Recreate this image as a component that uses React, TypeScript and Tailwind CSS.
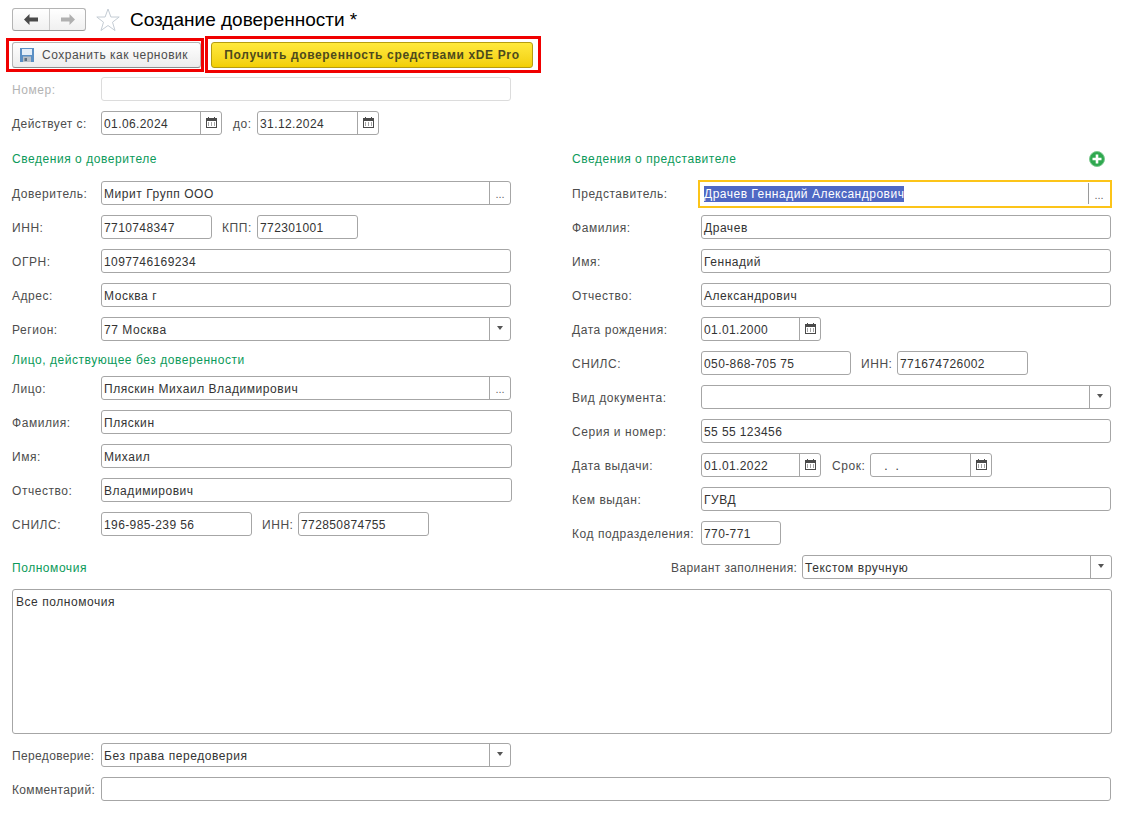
import type { ReactNode } from "react";

type Side = "dots" | "down" | "cal";

function CalendarIcon() {
    return (
        <svg className="mb-[2px]" width="11" height="11" viewBox="0 0 11 11">
            <rect x="0.5" y="1.5" width="10" height="9" fill="#fff" stroke="#4a4a4a" />
            <rect x="0" y="1" width="11" height="3" fill="#4a4a4a" />
            <rect x="2" y="0" width="1" height="2" fill="#4a4a4a" />
            <rect x="8" y="0" width="1" height="2" fill="#4a4a4a" />
            <path d="M2 6h1M5 6h1M8 6h1M2 8h1M5 8h1M8 8h1" stroke="#4a4a4a" strokeWidth="1" />
        </svg>
    );
}

function SideButton({ kind, inset }: { kind: Side; inset?: boolean }) {
    return (
        <div
            className={`w-[21px] shrink-0 border-l flex items-center justify-center text-[#666] ${inset ? "h-[21px] border-[#9a9a9a]" : "h-full border-[#a6a6a6]"}`}
        >
            {kind === "dots" ? <span className="text-[11px] leading-none mt-[3px] tracking-normal">...</span> : null}
            {kind === "down" ? <div className="w-0 h-0 border-x-[3px] border-x-transparent border-t-[4px] border-t-[#555] mb-[2px]" /> : null}
            {kind === "cal" ? <CalendarIcon /> : null}
        </div>
    );
}

function Field({ value, width, side, muted }: { value?: string; width?: string; side?: Side; muted?: boolean }) {
    const numeric = /^[\d\s.-]*$/.test(value ?? "");
    return (
        <div
            className={`${width ?? "flex-1"} h-6 bg-white rounded-[3px] border flex items-center ${muted ? "border-[#dcdcdc]" : "border-[#a6a6a6]"}`}
        >
            <div className={`flex-1 px-[2px] pt-[1px] text-[#333] whitespace-pre overflow-hidden ${numeric ? "tracking-[0.4px]" : ""}`}>{value}</div>
            {side ? <SideButton kind={side} /> : null}
        </div>
    );
}

function Label({ children, width, muted }: { children: ReactNode; width?: string; muted?: boolean }) {
    return (
        <div className={`${width ?? ""} shrink-0 pt-[1px] whitespace-nowrap ${muted ? "text-[#b3b3b3]" : "text-[#4d4d4d]"}`}>{children}</div>
    );
}

function Row({ children, className }: { children: ReactNode; className?: string }) {
    return <div className={`flex items-center h-6 ${className ?? ""}`}>{children}</div>;
}

function Section({ children, className }: { children: ReactNode; className?: string }) {
    return <div className={`text-[#0b9a5a] pt-[1px] ${className ?? ""}`}>{children}</div>;
}

function LabeledField({ label, value, side, labelWidth }: { label: string; value: string; side?: Side; labelWidth: string }) {
    return (
        <Row>
            <Label width={labelWidth}>{label}</Label>
            <Field value={value} side={side} />
        </Row>
    );
}

export default function App() {
    return (
        <div className="w-[1143px] h-[822px] bg-white overflow-hidden font-['Liberation_Sans',Arial,sans-serif] text-[12px] tracking-[0.55px]">
            {/* title bar */}
            <div className="flex items-center h-[23px] mt-2 ml-3">
                <div className="flex w-[74px] h-[23px] border border-[#b4b4b4] border-b-[#9a9a9a] rounded-[3px] bg-gradient-to-b from-white to-[#f0f0f0]">
                    <div className="w-[37px] flex items-center justify-center border-r border-[#c8c8c8]">
                        <svg width="14" height="11" viewBox="0 0 14 11">
                            <path d="M0 5.5 5.5 0v3.5H14v4H5.500V11z" fill="#4a4a4a" />
                        </svg>
                    </div>
                    <div className="flex-1 flex items-center justify-center">
                        <svg width="14" height="11" viewBox="0 0 14 11">
                            <path d="M14 5.500 8.500 0v3.500H0v4h8.500V11z" fill="#b0b0b0" />
                        </svg>
                    </div>
                </div>
                <svg className="ml-[10px]" width="24" height="24" viewBox="0 0 24 24">
                    <path d="M12 1l2.900 8h8.300l-6.700 5.200 2.500 8.300L12 17.500l-7 5 2.500-8.300L.8 9h8.300z" fill="#fff" stroke="#c4ccd4" />
                </svg>
                <div className="ml-[10px] text-[19px] tracking-normal text-black leading-none">Создание доверенности *</div>
            </div>

            {/* toolbar */}
            <div className="flex items-center ml-[6px] mt-[5px] h-[37px]">
                <div className="w-[198px] h-[34px] border-[3px] border-[#f00000] flex items-center pl-[3px]">
                    <div className="w-[190px] h-[26px] flex items-center pl-[7px] gap-[8px] rounded-[3px] border border-[#b4b4b4] border-b-[#8c8c8c] bg-gradient-to-b from-white to-[#ececec] text-[#4d4d4d] tracking-[0.5px]">
                        <svg width="14" height="14" viewBox="0 0 14 14">
                            <path d="M0 0h14v14H0z" fill="#5b8fc4" />
                            <rect x="2" y="1" width="10" height="6" fill="#e4eef8" />
                            <rect x="3" y="8.500" width="8" height="5.500" fill="#b9bfc6" />
                            <rect x="4.500" y="10" width="2.500" height="3" fill="#5f6f80" />
                        </svg>
                        <span>Сохранить как черновик</span>
                    </div>
                </div>
                <div className="ml-[1px] w-[336px] h-[37px] border-[3px] border-[#f00000] flex items-center pl-[3px]">
                    <div className="w-[322px] h-[26px] flex items-center justify-center rounded-[3px] border border-[#b59c10] bg-gradient-to-b from-[#ffe93b] to-[#f2cf00] font-bold text-[#4d4a1c] tracking-[0.65px]">
                        Получить доверенность средствами xDE Pro
                    </div>
                </div>
            </div>

            {/* number and dates */}
            <div className="ml-3 mt-[4px] w-[499px] flex flex-col gap-[10px]">
                <Row>
                    <Label width="w-[89px]" muted>Номер:</Label>
                    <Field muted />
                </Row>
                <Row>
                    <Label width="w-[89px] tracking-[0.45px]">Действует с:</Label>
                    <Field value="01.06.2024" width="w-[121px]" side="cal" />
                    <Label width="w-[35px] pl-[11px]">до:</Label>
                    <Field value="31.12.2024" width="w-[122px]" side="cal" />
                </Row>
            </div>

            {/* two columns */}
            <div className="flex mt-[12px] ml-3">
                <div className="w-[499px]">
                    <Section className="h-[23px] leading-[23px] mb-[11px]">Сведения о доверителе</Section>
                    <div className="flex flex-col gap-[10px]">
                        <LabeledField labelWidth="w-[89px]" label="Доверитель:" value="Мирит Групп ООО" side="dots" />
                        <Row>
                            <Label width="w-[89px]">ИНН:</Label>
                            <Field value="7710748347" width="w-[111px]" />
                            <Label width="w-[45px] pl-[10px]">КПП:</Label>
                            <Field value="772301001" width="w-[101px]" />
                        </Row>
                        <LabeledField labelWidth="w-[89px]" label="ОГРН:" value="1097746169234" />
                        <LabeledField labelWidth="w-[89px]" label="Адрес:" value="Москва г" />
                        <LabeledField labelWidth="w-[89px]" label="Регион:" value="77 Москва" side="down" />
                    </div>
                    <Section className="h-[22px] leading-[22px] mt-[7px] mb-[6px]">Лицо, действующее без доверенности</Section>
                    <div className="flex flex-col gap-[10px]">
                        <LabeledField labelWidth="w-[89px]" label="Лицо:" value="Пляскин Михаил Владимирович" side="dots" />
                        <div className="flex flex-col gap-[10px] -mr-[1px]">
                            <LabeledField labelWidth="w-[89px]" label="Фамилия:" value="Пляскин" />
                            <LabeledField labelWidth="w-[89px]" label="Имя:" value="Михаил" />
                            <LabeledField labelWidth="w-[89px]" label="Отчество:" value="Владимирович" />
                            <Row>
                                <Label width="w-[89px]">СНИЛС:</Label>
                                <Field value="196-985-239 56" width="w-[151px]" />
                                <Label width="w-[46px] pl-[10px]">ИНН:</Label>
                                <Field value="772850874755" width="w-[131px]" />
                            </Row>
                        </div>
                    </div>
                </div>

                <div className="w-[539px] ml-[61px]">
                    <Section className="h-[23px] leading-[23px] mb-[11px] flex items-center justify-between">
                        <span>Сведения о представителе</span>
                        <svg className="mr-[6px]" width="16" height="16" viewBox="0 0 16 16">
                            <circle cx="8" cy="8" r="7.500" fill="#2fa84f" stroke="#7cc98f" strokeWidth="1" />
                            <path d="M8 3.500v9M3.500 8h9" stroke="#fff" strokeWidth="2.600" />
                        </svg>
                    </Section>
                    <div className="flex flex-col gap-[10px]">
                        <Row>
                            <Label width="w-[126px]">Представитель:</Label>
                            <div className="flex-1 h-[28px] mt-[1px] -mr-[1px] pr-[1px] border-2 border-[#fcc419] flex items-center">
                                <div className="flex-1 pl-[4px] tracking-[0.5px]">
                                    <span className="bg-[#4f68c4] text-white py-[1px]">Драчев Геннадий Александрович</span>
                                </div>
                                <SideButton kind="dots" inset />
                            </div>
                        </Row>
                        <LabeledField labelWidth="w-[129px]" label="Фамилия:" value="Драчев" />
                        <LabeledField labelWidth="w-[129px]" label="Имя:" value="Геннадий" />
                        <LabeledField labelWidth="w-[129px]" label="Отчество:" value="Александрович" />
                        <Row>
                            <Label width="w-[129px]">Дата рождения:</Label>
                            <Field value="01.01.2000" width="w-[120px]" side="cal" />
                        </Row>
                        <Row>
                            <Label width="w-[129px]">СНИЛС:</Label>
                            <Field value="050-868-705 75" width="w-[150px]" />
                            <Label width="w-[46px] pl-[10px]">ИНН:</Label>
                            <Field value="771674726002" width="w-[131px]" />
                        </Row>
                        <LabeledField labelWidth="w-[129px]" label="Вид документа:" value="" side="down" />
                        <LabeledField labelWidth="w-[129px]" label="Серия и номер:" value="55 55 123456" />
                        <Row>
                            <Label width="w-[129px]">Дата выдачи:</Label>
                            <Field value="01.01.2022" width="w-[120px]" side="cal" />
                            <Label width="w-[49px] pl-[11px]">Срок:</Label>
                            <Field value="   .  ." width="w-[122px]" side="cal" />
                        </Row>
                        <LabeledField labelWidth="w-[129px]" label="Кем выдан:" value="ГУВД" />
                        <Row>
                            <Label width="w-[129px]">Код подразделения:</Label>
                            <Field value="770-771" width="w-[80px]" />
                        </Row>
                    </div>
                </div>
            </div>

            {/* powers */}
            <div className="mx-3 mt-[10px] w-[1100px]">
                <Row className="justify-between">
                    <Section>Полномочия</Section>
                    <div className="flex items-center">
                        <Label width="w-[131px] tracking-[0.4px]">Вариант заполнения:</Label>
                        <Field value="Текстом вручную" width="w-[310px]" side="down" />
                    </div>
                </Row>
                <div className="mt-[10px] h-[145px] border border-[#a6a6a6] rounded-[3px] px-[3px] pt-[3px] text-[#333]">Все полномочия</div>
                <div className="mt-[9px] flex flex-col gap-[10px]">
                    <Row>
                        <Label width="w-[89px] tracking-[0.35px]">Передоверие:</Label>
                        <Field value="Без права передоверия" width="w-[410px]" side="down" />
                    </Row>
                    <div className="w-[1099px]">
                        <LabeledField labelWidth="w-[89px] tracking-[0.35px]" label="Комментарий:" value="" />
                    </div>
                </div>
            </div>
        </div>
    );
}
